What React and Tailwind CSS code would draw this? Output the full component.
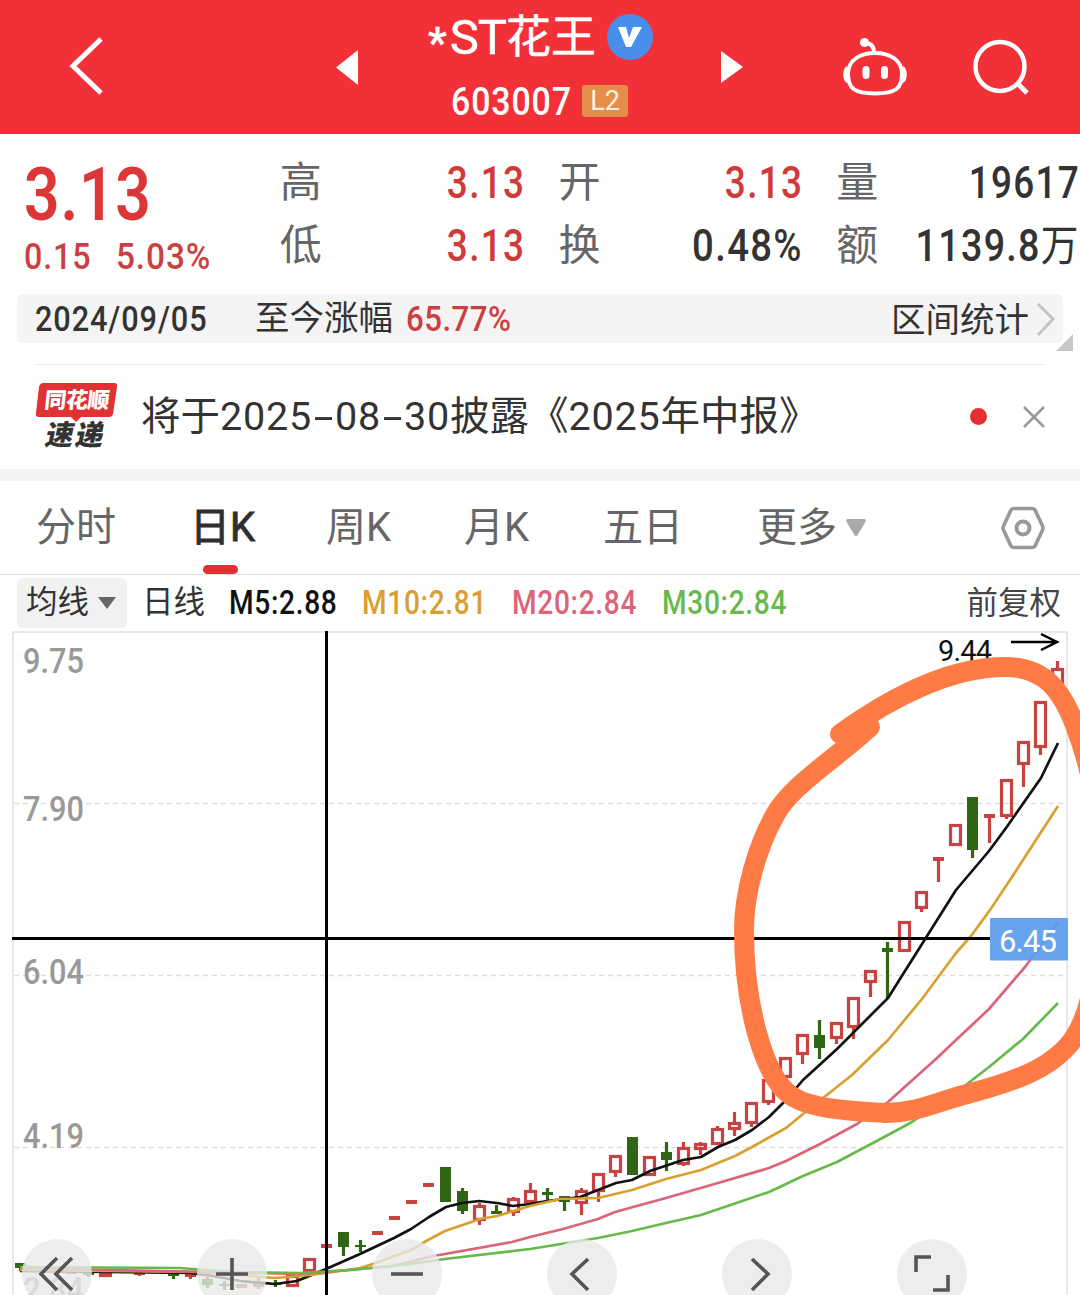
import React from "react";

const fontStack =
  "font-['Roboto','Noto_Sans_CJK_SC',sans-serif]";

// Candles run from the newest (index 0, right edge) to the oldest.
// t: r = hollow red, g = solid green, d = flat red
// [type, high, bodyTop, bodyBottom, low]
const candles = [
  ["r", 661, 668, 700, 707],
  ["r", 701, 701, 748, 755],
  ["r", 741, 741, 765, 787],
  ["r", 779, 779, 817, 819],
  ["d", 814, 814, 818, 843],
  ["g", 797, 797, 850, 858],
  ["r", 824, 824, 846, 846],
  ["d", 857, 857, 861, 882],
  ["r", 891, 891, 909, 912],
  ["r", 921, 921, 952, 952],
  ["g", 942, 948, 952, 998],
  ["r", 970, 970, 983, 997],
  ["r", 997, 997, 1028, 1039],
  ["r", 1022, 1022, 1039, 1044],
  ["g", 1020, 1035, 1048, 1059],
  ["r", 1034, 1034, 1055, 1064],
  ["r", 1057, 1057, 1078, 1081],
  ["r", 1079, 1079, 1103, 1105],
  ["r", 1102, 1102, 1124, 1127],
  ["r", 1112, 1122, 1130, 1136],
  ["r", 1126, 1128, 1145, 1145],
  ["r", 1142, 1143, 1150, 1155],
  ["r", 1142, 1147, 1165, 1166],
  ["g", 1142, 1152, 1160, 1171],
  ["r", 1156, 1156, 1176, 1176],
  ["g", 1137, 1137, 1175, 1175],
  ["r", 1155, 1155, 1173, 1177],
  ["r", 1173, 1173, 1192, 1202],
  ["r", 1188, 1190, 1204, 1215],
  ["g", 1196, 1196, 1202, 1211],
  ["g", 1188, 1192, 1195, 1201],
  ["r", 1183, 1190, 1203, 1203],
  ["r", 1197, 1198, 1213, 1216],
  ["g", 1205, 1211, 1214, 1214],
  ["r", 1203, 1205, 1221, 1225],
  ["g", 1188, 1191, 1211, 1214],
  ["g", 1167, 1167, 1202, 1202],
  ["d", 1183, 1183, 1187, 1187],
  ["d", 1200, 1200, 1204, 1204],
  ["d", 1216, 1216, 1220, 1220],
  ["d", 1231, 1231, 1235, 1235],
  ["g", 1240, 1245, 1247, 1252],
  ["g", 1232, 1232, 1247, 1256],
  ["d", 1244, 1244, 1248, 1248],
  ["r", 1258, 1258, 1272, 1272],
  ["r", 1274, 1275, 1287, 1287],
  ["g", 1280, 1283, 1285, 1287],
  ["d", 1278, 1283, 1287, 1289],
  ["d", 1284, 1284, 1288, 1288],
  ["g", 1281, 1284, 1286, 1290],
  ["g", 1277, 1279, 1285, 1288],
  ["d", 1274, 1274, 1277, 1279],
  ["g", 1273, 1273, 1276, 1279],
  ["d", 1271, 1271, 1273, 1273],
  ["d", 1271, 1272, 1275, 1276],
  ["d", 1271, 1271, 1273, 1273],
  ["r", 1271, 1271, 1277, 1277],
  ["g", 1271, 1273, 1275, 1277],
  ["d", 1270, 1271, 1274, 1274],
  ["g", 1268, 1268, 1271, 1272],
  ["d", 1268, 1268, 1271, 1271],
  ["g", 1263, 1263, 1268, 1271],
];

const averages = [
  {
    color: "#111111",
    points:
      "20,1271 190,1273 213,1276 240,1281 275,1284 297,1281 326,1269 360,1254 394,1238 411,1229 429,1217 446,1207 462,1203 479,1201 497,1203 513,1206 530,1204 547,1201 580,1197 598,1190 616,1183 632,1180 650,1171 683,1160 701,1157 718,1147 735,1140 752,1130 769,1117 786,1100 803,1080 837,1049 888,998 956,890 989,851 1006,828 1041,778 1058,743",
  },
  {
    color: "#d9a030",
    points:
      "20,1270 200,1272 275,1278 310,1275 326,1273 360,1268 376,1263 411,1250 428,1240 445,1231 480,1219 497,1216 530,1206 560,1199 598,1198 632,1190 666,1179 701,1170 735,1156 752,1147 786,1128 803,1114 852,1075 888,1040 922,999 956,953 971,936 990,910 1010,880 1058,806",
  },
  {
    color: "#dc6478",
    points:
      "20,1268 300,1274 326,1272 394,1266 428,1257 512,1242 530,1237 563,1229 598,1219 615,1212 666,1198 718,1183 769,1168 786,1161 820,1144 857,1124 888,1102 937,1058 956,1040 989,1009 1025,967 1058,923",
  },
  {
    color: "#68b94c",
    points:
      "20,1267 180,1268 230,1272 300,1273 350,1270 410,1264 445,1259 530,1249 598,1238 632,1231 666,1223 701,1215 769,1192 803,1176 837,1162 888,1135 912,1122 962,1088 989,1067 1023,1039 1058,1003",
  },
];

const priceLabels = [
  { text: "9.75", y: 673 },
  { text: "7.90", y: 821 },
  { text: "6.04", y: 984 },
  { text: "4.19", y: 1148 },
  { text: "2.84", y: 1302 },
];

const controls = [
  { name: "fast-back", path: "M35 19 19 35 35 51M50 19 34 35 50 51" },
  { name: "zoom-in", path: "M19 35H51M35 19V51" },
  { name: "zoom-out", path: "M19 35H51" },
  { name: "prev", path: "M41 20 25 35 41 51" },
  { name: "next", path: "M30 20 46 35 30 51" },
  { name: "expand", path: "M19 33V18H34M51 36V51H36" },
];

const Num = ({ children, className = "" }) => (
  <span
    className={`inline-block whitespace-nowrap font-medium leading-none ${className}`}
  >
    {children}
  </span>
);

const Header = () => (
  <header className="flex h-[134px] items-start bg-[#f23037] text-white">
    <svg className="ml-[66px] mt-[32px] h-[68px] w-10" viewBox="0 0 40 68" fill="none">
      <path d="M35 7 7 34 35 61" stroke="white" strokeWidth="5" />
    </svg>
    <svg className="ml-[230px] mt-[50px] h-[35px] w-[22px]" viewBox="0 0 22 35">
      <path d="M22 0V35L0 17.5Z" fill="white" />
    </svg>
    <div className="ml-[50px] flex w-[264px] flex-col items-center">
      <div className="mt-[13px] flex h-[48px] w-full items-center pl-[20px]">
        <span className="flex w-[168px] items-center whitespace-nowrap text-[45px] leading-none [-webkit-text-stroke:0.5px_white]">
          <span className="relative top-[6px] w-[22px] text-[42px] font-medium">*</span>
          <span className="w-[57px] text-[49px] tracking-[-1px]">ST</span>
          花王
        </span>
        <span className="ml-[11px] mt-[-1px] flex h-[46px] w-[46px] items-center justify-center rounded-full bg-[#478feb]">
          <svg className="h-5 w-6" viewBox="0 0 24 20">
            <path d="M0 0H8L11 11 15 0H24L13 20H8Z" fill="white" />
          </svg>
        </span>
      </div>
      <div className="mt-[24px] flex h-[34px] w-full items-center pl-[43px]">
        <span className="w-[131px]">
          <Num className="origin-left scale-x-[0.88] text-[38.5px] tracking-[1px]">603007</Num>
        </span>
        <span className="mt-[-2px] flex h-8 w-[46px] items-center justify-center rounded-[3px] bg-[#e58d4a] text-[27px] leading-none text-[#fff3e0]">
          L2
        </span>
      </div>
    </div>
    <svg className="ml-[49px] mt-[51px] h-8 w-[22px]" viewBox="0 0 22 32">
      <path d="M0 0V32L22 16Z" fill="white" />
    </svg>
    <svg className="ml-[99px] mt-[36px] h-[62px] w-[66px]" viewBox="0 0 66 62" fill="none">
      <path
        d="M33 17C48 17 60 24 60 38C60 52 54 57.500 33 57.500S6 52 6 38C6 24 18 17 33 17Z"
        stroke="white"
        strokeWidth="4"
      />
      <path d="M23 7C29 7 32 10 32 17" stroke="white" strokeWidth="4" />
      <circle cx="22.500" cy="6.500" r="4.500" fill="white" />
      <path d="M5 30C0 32 0 45 5 47ZM61 30C66 32 66 45 61 47Z" fill="white" />
      <path d="M24 33.500V39.500M42.500 33.500V39.500" stroke="white" strokeWidth="7" strokeLinecap="round" />
    </svg>
    <svg className="ml-[64px] mt-[38px] h-[60px] w-[60px]" viewBox="0 0 60 60" fill="none">
      <circle cx="28" cy="28.500" r="24.500" stroke="white" strokeWidth="4.500" />
      <path d="M45 45 55 55" stroke="white" strokeWidth="5" />
    </svg>
  </header>
);

const Stat = ({ label, value, unit, valueClass = "", numClass = "scale-x-[0.85]" }) => (
  <div className="flex h-[63px] items-center">
    <span className="shrink-0 text-[42px] leading-none text-[#666]">{label}</span>
    <span className={`flex flex-1 justify-end pt-[3px] ${valueClass}`}>
      <Num className={`origin-right text-[43.5px] tracking-[1.5px] ${numClass}`}>
        {value}
        {unit && <span className="font-normal">{unit}</span>}
      </Num>
    </span>
  </div>
);

const Quote = () => (
  <section className="flex h-[160px]">
    <div className="w-[280px] pl-6 text-[#dc3636]">
      <div className="mt-[23px] h-[74px]">
        <Num className="origin-left scale-x-[0.83] text-[75px] font-semibold tracking-[1px]">
          3.13
        </Num>
      </div>
      <div className="mt-[7px] flex h-10 text-[#cc3f40]">
        <span className="w-[92px]">
          <Num className="origin-left scale-x-[0.86] text-[37.5px] tracking-[1px]">0.15</Num>
        </span>
        <Num className="origin-left scale-x-[0.89] text-[37.5px] tracking-[1px]">5.03%</Num>
      </div>
    </div>
    <div className="mt-[17px] w-[246px]">
      <Stat label="高" value="3.13" valueClass="text-[#d03a3a]" />
      <Stat label="低" value="3.13" valueClass="text-[#d03a3a]" />
    </div>
    <div className="ml-[33px] mt-[17px] w-[245px]">
      <Stat label="开" value="3.13" valueClass="text-[#d03a3a]" />
      <Stat label="换" value="0.48%" valueClass="text-[#333]" numClass="scale-x-[0.88]" />
    </div>
    <div className="ml-[33px] mt-[17px] w-[244px]">
      <Stat label="量" value="19617" valueClass="text-[#333]" />
      <Stat
        label="额"
        value="1139.8"
        unit="万"
        valueClass="text-[#333]"
        numClass="scale-x-[0.865]"
      />
    </div>
  </section>
);

const RangeBar = () => (
  <section className="relative h-[70px]">
    <div className="mx-[17px] flex h-[49px] items-center rounded-[5px] bg-[#f4f4f4] pl-[18px] text-[34.5px] leading-none text-[#333]">
      <span className="w-[220px] pt-px">
        <Num className="origin-left scale-x-[0.89] tracking-[1px]">2024/09/05</Num>
      </span>
      <span className="w-[151px] whitespace-nowrap">至今涨幅</span>
      <Num className="origin-left scale-x-[0.905] pt-px tracking-[0.5px] text-[#cc3f40]">
        65.77%
      </Num>
      <span className="ml-auto pt-1">区间统计</span>
      <svg className="ml-[6px] mr-[6px] h-9 w-[22px]" viewBox="0 0 22 36" fill="none">
        <path d="M3 3 18 18 3 34" stroke="#c4c4c4" strokeWidth="3" />
      </svg>
    </div>
    <svg className="absolute right-[7px] top-[40px] h-[17px] w-[17px]" viewBox="0 0 17 17">
      <path d="M17 0V17H0Z" fill="#c8c8c8" />
    </svg>
    <div className="absolute -bottom-px left-[35px] h-px w-[1010px] bg-[#e8e8e8]" />
  </section>
);

const Dash = () => (
  <span className="inline-block w-[23px] scale-x-[1.8] text-center">-</span>
);

const News = () => (
  <section className="flex h-[105px] items-center">
    <div className="relative ml-[35px] mt-[-1px] flex h-[68px] w-[83px] flex-col items-center leading-none">
      <svg className="absolute inset-0 h-[42px] w-[83px]" viewBox="0 0 83 42">
        <path
          d="M8 1H79Q83 1 82 5L78 32Q77 35 74 35H46L41 40 36 35H4Q0 35 1 31L4 5Q5 1 8 1Z"
          fill="#e03133"
        />
      </svg>
      <span className="relative mt-[8px] h-[34px] -skew-x-6 text-[22px] font-black tracking-[-0.5px] text-white">
        同花顺
      </span>
      <span className="-skew-x-12 whitespace-nowrap text-[28px] font-black tracking-[2px] text-[#333]">
        速递
      </span>
    </div>
    <p className="ml-[23px] whitespace-nowrap text-[39.5px] leading-none text-[#333]">
      将于<span className="tracking-[0.8px]">2025</span>
      <Dash />
      <span className="tracking-[0.8px]">08</span>
      <Dash />
      <span className="tracking-[0.8px]">30</span>披露《
      <span className="tracking-[0.8px]">2025</span>年中报》
    </p>
    <span className="ml-auto h-[17px] w-[17px] rounded-full bg-[#e53032]" />
    <svg className="ml-[35px] mr-[34px] h-6 w-6" viewBox="0 0 24 24">
      <path d="M2 2 22 22M22 2 2 22" stroke="#999" strokeWidth="2.500" />
    </svg>
  </section>
);

const Tabs = () => (
  <nav className="relative flex h-[94px] items-center border-b border-[#e4e4e4] pl-9 text-[40px] leading-none text-[#666]">
    <span className="w-[154px]">分时</span>
    <span className="w-[136px] text-[#2f2f2f] [-webkit-text-stroke:0.9px_#2f2f2f]">日K</span>
    <span className="w-[138px]">周K</span>
    <span className="w-[139px]">月K</span>
    <span className="w-[154px]">五日</span>
    <span>更多</span>
    <svg className="ml-[9px] h-[18px] w-5" viewBox="0 0 20 18">
      <path d="M1 0H19L20 2 11 17H9L0 2Z" fill="#aaa" />
    </svg>
    <svg className="ml-auto mr-[34px] h-[44px] w-[46px]" viewBox="0 0 46 44" fill="none">
      <path
        d="M14 2.500H32Q34 2.500 35 4L42.500 20Q43.500 22 42.500 24L35 40Q34 41.500 32 41.500H14Q12 41.500 11 40L3.500 24Q2.500 22 3.500 20L11 4Q12 2.500 14 2.500Z"
        stroke="#999"
        strokeWidth="3.600"
      />
      <circle cx="23" cy="22" r="6.500" stroke="#999" strokeWidth="4" />
    </svg>
    <span className="absolute bottom-0 left-[203px] h-[9px] w-[35px] rounded-full bg-[#e03133]" />
  </nav>
);

const Legend = () => (
  <div className="flex h-[55px] items-center pl-[17px] text-[31.5px] leading-none text-[#333]">
    <div className="mt-px flex h-[50px] w-[110px] items-center rounded-md bg-[#f1f1f1] pl-[9px]">
      均线
      <svg className="ml-[9px] h-3 w-[18px]" viewBox="0 0 18 12">
        <path d="M0 0H18L9 12Z" fill="#666" />
      </svg>
    </div>
    <span className="ml-[15px] w-[87px] pt-px">日线</span>
    <span className="w-[133px] text-[33.5px]">
      <Num className="origin-left scale-x-[0.84] tracking-[0.8px] text-[#111]">M5:2.88</Num>
    </span>
    <span className="w-[150px] text-[33.5px]">
      <Num className="origin-left scale-x-[0.84] tracking-[0.8px] text-[#d9a030]">M10:2.81</Num>
    </span>
    <span className="w-[150px] text-[33.5px]">
      <Num className="origin-left scale-x-[0.84] tracking-[0.8px] text-[#dc6478]">M20:2.84</Num>
    </span>
    <span className="text-[33.5px]">
      <Num className="origin-left scale-x-[0.84] tracking-[0.8px] text-[#68b94c]">M30:2.84</Num>
    </span>
    <span className="ml-auto mr-[19px] pt-[2px] text-[#444]">前复权</span>
  </div>
);

const Candle = ({ x, data }) => {
  const [type, high, top, bottom, low] = data;
  const color = type === "g" ? "#2f6614" : "#c84242";

  return (
    <g stroke={color} strokeWidth="3.200" fill="none">
      {high < top && <path d={`M${x} ${high}V${top}`} />}
      {low > bottom && <path d={`M${x} ${bottom}V${low}`} />}
      {type === "r" ? (
        <rect x={x - 5} y={top + 1.5} width="10" height={bottom - top - 3} />
      ) : (
        <rect
          x={x - 5.5}
          y={top}
          width="11"
          height={bottom - top}
          fill={color}
          stroke="none"
        />
      )}
    </g>
  );
};

const Chart = () => (
  <section className="relative h-[665px]">
    <svg
      className="block h-[665px] w-[1080px]"
      viewBox="0 630 1080 665"
      fill="none"
      fontFamily="Roboto, sans-serif"
    >
      <path d="M13 1295V632H1067V1295" stroke="#e8e8e8" strokeWidth="2" />
      <path
        d="M14 803.500H1066M14 975.500H1066M14 1147.500H1066"
        stroke="#dedede"
        strokeWidth="1.300"
        strokeDasharray="5 4"
      />
      {priceLabels.map((label) => (
        <text
          key={label.text}
          x="23"
          y={label.y}
          fontSize="35"
          fontWeight="500"
          fill="#999"
          textLength="61"
          lengthAdjust="spacingAndGlyphs"
        >
          {label.text}
        </text>
      ))}

      {candles.map((data, i) => (
        <Candle key={i} x={1057.5 - i * 17} data={data} />
      ))}
      {averages.map((line) => (
        <polyline
          key={line.color}
          points={line.points}
          stroke={line.color}
          strokeWidth="2.700"
          strokeLinejoin="round"
        />
      ))}

      {/* crosshair */}
      <path d="M326.500 631V1295M12 938.500H990" stroke="#000" strokeWidth="3" />
      <rect x="990" y="918" width="78" height="42.500" rx="1" fill="#5b9bec" fillOpacity="0.92" />
      <text x="999" y="952" fontSize="31" fill="#fff" textLength="58">
        6.45
      </text>

      {/* latest high */}
      <text x="938" y="661" fontSize="29" fill="#111" textLength="54">
        9.44
      </text>
      <path d="M1011 642H1057M1041 634 1057 642 1041 650" stroke="#000" strokeWidth="2.500" />

      {/* hand-drawn circle */}
      <path
        d="M840 734C890 698 950 667 1005 667C1046 667 1062 692 1075 725C1098 785 1104 850 1100 900C1098 960 1094 1008 1074 1038C1052 1070 1010 1083 960 1096C935 1103 915 1113 885 1113C855 1111 815 1110 793 1097C762 1078 744 1000 744 930C744 893 757 847 775 815C791 786 830 763 870 727"
        stroke="#ff7b45"
        strokeWidth="20"
        strokeLinecap="round"
        strokeLinejoin="round"
      />
    </svg>

    <div className="absolute left-[22px] top-[609px] flex gap-[105px]">
      {controls.map((control) => (
        <button
          key={control.name}
          className="h-[70px] w-[70px] rounded-full bg-[#e8e8e8]/80"
        >
          <svg className="h-[70px] w-[70px]" viewBox="0 0 70 70" fill="none">
            <path d={control.path} stroke="#555" strokeWidth="3.600" />
          </svg>
        </button>
      ))}
    </div>
  </section>
);

const App = () => (
  <main className={`h-[1295px] w-[1080px] overflow-hidden bg-white ${fontStack}`}>
    <Header />
    <Quote />
    <RangeBar />
    <News />
    <div className="h-3 bg-[#f4f4f4]" />
    <Tabs />
    <Legend />
    <Chart />
  </main>
);

export default App;
